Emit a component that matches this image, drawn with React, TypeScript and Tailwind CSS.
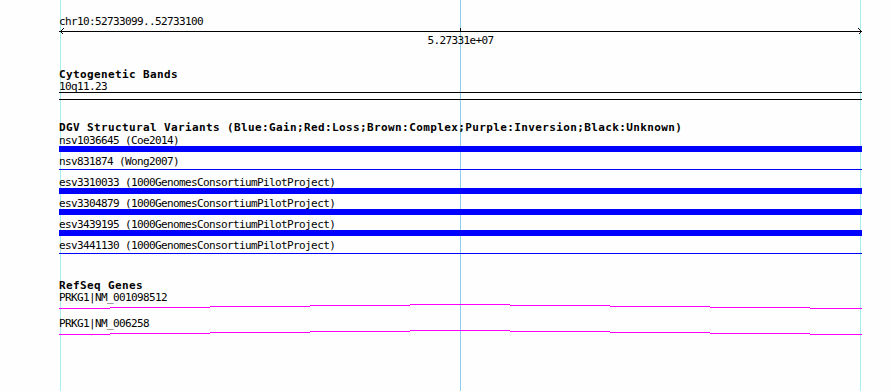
import React from "react";

type Variant = { id: string; source: string; thin?: boolean };

const variants: Variant[] = [
  { id: "nsv1036645", source: "Coe2014" },
  { id: "nsv831874", source: "Wong2007", thin: true },
  { id: "esv3310033", source: "1000GenomesConsortiumPilotProject" },
  { id: "esv3304879", source: "1000GenomesConsortiumPilotProject" },
  { id: "esv3439195", source: "1000GenomesConsortiumPilotProject" },
  { id: "esv3441130", source: "1000GenomesConsortiumPilotProject", thin: true },
];

const genes = ["PRKG1|NM_001098512", "PRKG1|NM_006258"];

// x offset of the track panel on the page
const X0 = 59;

// stepped line, page x ranges with their row offset (0 = highest)
const steps: [number, number, number][] = [
  [59, 110, 4],
  [110, 210, 3],
  [210, 310, 2],
  [310, 410, 1],
  [410, 510, 0],
  [510, 610, 1],
  [610, 710, 2],
  [710, 810, 3],
  [810, 862, 4],
];

const mono = "font-['DejaVu_Sans_Mono',monospace] text-[11px] leading-[11px] text-black whitespace-pre";
const plain = `${mono} tracking-[-0.62px]`;
const bold = `${mono} font-bold tracking-[0.38px]`;

const Ruler: React.FC = () => (
  <svg width={803} height={8} className="block" shapeRendering="crispEdges">
    <line x1={0} y1={4.5} x2={803} y2={4.5} stroke="#000" />
    <line x1={401.5} y1={1} x2={401.5} y2={5} stroke="#000" />
    <polyline points="4.5,1.5 1.5,4.5 4.5,7.5" fill="none" stroke="#000" />
    <polyline points="799.5,1.5 802.5,4.5 799.5,7.5" fill="none" stroke="#000" />
  </svg>
);

const GeneLine: React.FC = () => {
  const d = steps.map(([a, b, lvl]) => `M${a - X0} ${lvl + 1.5}H${b - X0}`).join(" ");
  return (
    <svg width={803} height={7} className="block" shapeRendering="crispEdges">
      <path d={d} stroke="#ff00ff" fill="none" />
    </svg>
  );
};

export default function App() {
  return (
    <div className="relative w-[890px] h-[391px] overflow-hidden bg-[#fdfefd]">
      {/* grid lines */}
      <div className="absolute top-0 bottom-0 left-[60px] w-px bg-[#a4eef2]" />
      <div className="absolute top-0 bottom-0 left-[460px] w-px bg-[#8ccfec]" />
      <div className="absolute top-0 bottom-0 left-[860px] w-px bg-[#a4eef2]" />

      <div className="relative ml-[59px] w-[803px] flex flex-col pt-[16px]">
        {/* overview ruler */}
        <div className={plain}>chr10:52733099..52733100</div>
        <Ruler />
        <div className={`${plain} text-center`}>5.27331e+07</div>

        {/* cytobands */}
        <div className={`${bold} mt-[23px]`}>Cytogenetic Bands</div>
        <div className={`${plain} mt-[1px]`}>10q11.23</div>
        <div className="h-[8px] border-y border-black" />

        {/* DGV */}
        <div className={`${bold} mt-[22px]`}>
          DGV Structural Variants (Blue:Gain;Red:Loss;Brown:Complex;Purple:Inversion;Black:Unknown)
        </div>
        <div className="mt-[2px] flex flex-col gap-[4px]">
          {variants.map((v) => (
            <div key={v.id} className="flex flex-col">
              <div className={plain}>
                {v.id} ({v.source})
              </div>
              {v.thin ? (
                <div className="h-[6px] pt-[2px]">
                  <div className="h-px bg-[#0000ff]" />
                </div>
              ) : (
                <div className="h-[6px] bg-[#0000ff]" />
              )}
            </div>
          ))}
        </div>

        {/* RefSeq */}
        <div className={`${bold} mt-[23px]`}>RefSeq Genes</div>
        <div className="mt-[1px] flex flex-col gap-[8px]">
          {genes.map((g) => (
            <div key={g} className="flex flex-col">
              <div className={plain}>{g}</div>
              <GeneLine />
            </div>
          ))}
        </div>
      </div>
    </div>
  );
}
